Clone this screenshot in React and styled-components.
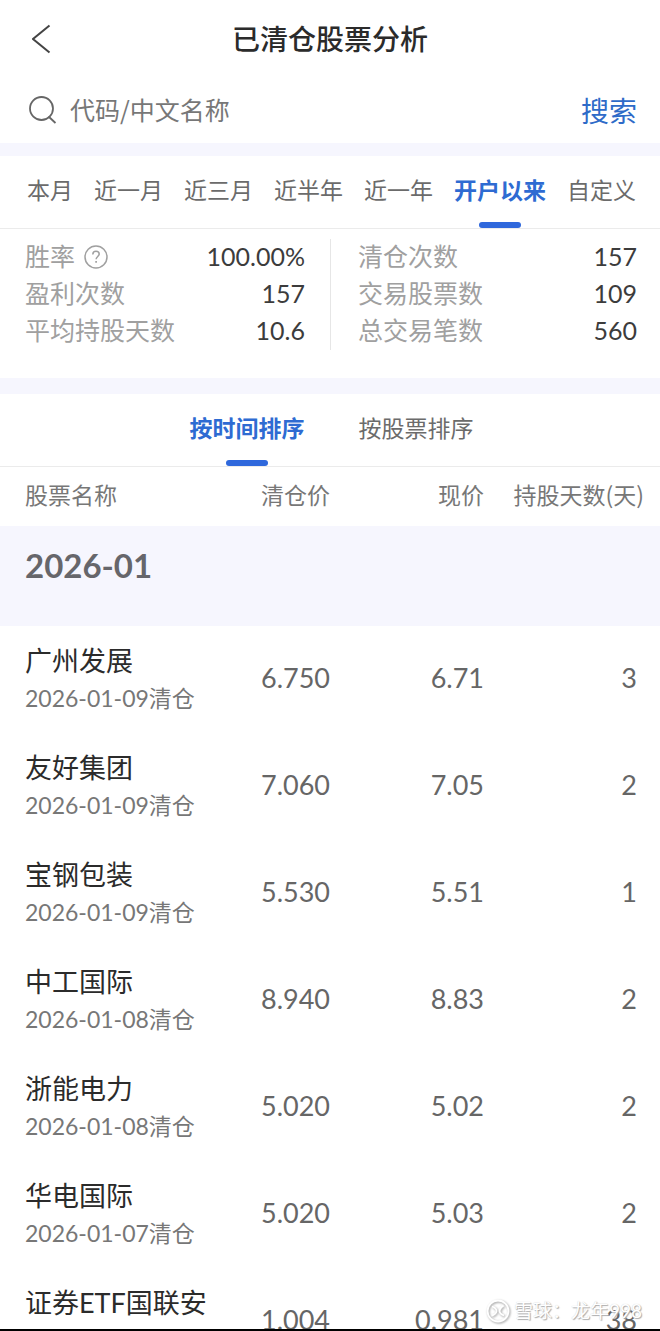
import React, { useState } from "react";
import styled, { createGlobalStyle } from "styled-components";

const PERIODS = ["本月", "近一月", "近三月", "近半年", "近一年", "开户以来", "自定义"];
const SORTS = ["按时间排序", "按股票排序"];

const LEFT_STATS = [
  { label: "胜率", value: "100.00%", help: true },
  { label: "盈利次数", value: "157" },
  { label: "平均持股天数", value: "10.6" }
];

const RIGHT_STATS = [
  { label: "清仓次数", value: "157" },
  { label: "交易股票数", value: "109" },
  { label: "总交易笔数", value: "560" }
];

const STOCKS = [
  { name: "广州发展", date: "2026-01-09", sell: "6.750", now: "6.71", days: 3 },
  { name: "友好集团", date: "2026-01-09", sell: "7.060", now: "7.05", days: 2 },
  { name: "宝钢包装", date: "2026-01-09", sell: "5.530", now: "5.51", days: 1 },
  { name: "中工国际", date: "2026-01-08", sell: "8.940", now: "8.83", days: 2 },
  { name: "浙能电力", date: "2026-01-08", sell: "5.020", now: "5.02", days: 2 },
  { name: "华电国际", date: "2026-01-07", sell: "5.020", now: "5.03", days: 2 },
  { name: "证券ETF国联安", date: "2026-01-07", sell: "1.004", now: "0.981", days: 38 }
];

const StatList = ({ items }) => (
  <StatColumn>
    {items.map(({ label, value, help }) => (
      <StatRow key={label}>
        <dt>
          {label}
          {help && (
            <HelpButton type="button" aria-label="胜率说明">
              <svg width="24" height="24" viewBox="0 0 24 24" fill="none" stroke="#a0a0a0">
                <circle cx="12" cy="12" r="11" strokeWidth="1.5" />
                <path
                  d="M8.8 9.4c0-2 1.4-3.2 3.2-3.2s3.2 1.2 3.2 2.9c0 2.3-3.1 2.6-3.1 5.2"
                  strokeWidth="1.5"
                />
                <path d="M12.1 16v1.8" strokeWidth="1.7" />
              </svg>
            </HelpButton>
          )}
        </dt>
        <dd>{value}</dd>
      </StatRow>
    ))}
  </StatColumn>
);

const App = () => {
  const [period, setPeriod] = useState("开户以来");
  const [sort, setSort] = useState("按时间排序");

  return (
    <>
      <GlobalStyle />
      <Page>
        <Header>
          <BackButton type="button" aria-label="返回">
            <svg width="20" height="30" viewBox="0 0 20 30" fill="none" stroke="#444" strokeWidth="2">
              <path d="M17.5 1.5L1 15L17.5 28.5" />
            </svg>
          </BackButton>
          <h1>已清仓股票分析</h1>
        </Header>

        <SearchForm onSubmit={e => e.preventDefault()}>
          <svg width="28" height="28" viewBox="0 0 28 28" fill="none" stroke="#666" strokeWidth="1.8">
            <circle cx="12.5" cy="12.5" r="11.5" />
            <path d="M19.5 20.5L26.5 27" />
          </svg>
          <input type="text" aria-label="代码/中文名称" placeholder="代码/中文名称" />
          <button type="submit">搜索</button>
        </SearchForm>
        <Divider $height={13} />

        <PeriodTabs>
          {PERIODS.map(item => (
            <Tab key={item} type="button" $active={item === period} onClick={() => setPeriod(item)}>
              {item}
            </Tab>
          ))}
        </PeriodTabs>

        <Stats>
          <StatList items={LEFT_STATS} />
          <StatList items={RIGHT_STATS} />
        </Stats>
        <Divider $height={16} />

        <SortTabs>
          {SORTS.map(item => (
            <Tab key={item} type="button" $active={item === sort} onClick={() => setSort(item)}>
              {item}
            </Tab>
          ))}
        </SortTabs>

        <ListArea>
          <StockTable>
            <colgroup>
              <col width="34%" />
              <col width="16%" />
              <col />
              <col width="176" />
            </colgroup>
            <thead>
              <tr>
                <th scope="col">股票名称</th>
                <th scope="col">清仓价</th>
                <th scope="col">现价</th>
                <th scope="col">持股天数(天)</th>
              </tr>
            </thead>
            <tbody>
              <tr>
                <MonthCell colSpan={4} scope="rowgroup">
                  2026-01
                </MonthCell>
              </tr>
              {STOCKS.map(({ name, date, sell, now, days }) => (
                <StockRow key={name}>
                  <td>
                    <StockName>{name}</StockName>
                    <StockDate>{date}清仓</StockDate>
                  </td>
                  <td>{sell}</td>
                  <td>{now}</td>
                  <td>{days}</td>
                </StockRow>
              ))}
            </tbody>
          </StockTable>
        </ListArea>

        <Watermark>
          <svg width="24" height="24" viewBox="0 0 24 24" fill="none" stroke="#fff" strokeWidth="1.8">
            <circle cx="12" cy="12" r="10.5" />
            <path d="M6 7.5c2 .5 4.5 2.5 4.5 4.500s-2.500 4-5 4.500M17.500 6.500c-2 1.500-4 3.500-4 5.500s2 3.500 4.500 4.500" />
          </svg>
          <span>雪球：龙年998</span>
        </Watermark>
        <BottomBar />
      </Page>
    </>
  );
};

export default App;

const GlobalStyle = createGlobalStyle`
  * {
    box-sizing: border-box;
  }

  body {
    margin: 0;
    background-color: white;
    font-family: Lato, "Noto Sans CJK SC", sans-serif;
    color: #666;
  }

  button,
  input {
    padding: 0;
    border: none;
    background: none;
    font-family: inherit;
    color: inherit;
  }

  button {
    cursor: pointer;
  }

  svg {
    display: block;
    flex-shrink: 0;
  }
`;

const Page = styled.main`
  position: relative;
  display: flex;
  flex-direction: column;
  width: 100%;
  height: 100vh;
  overflow: hidden;
`;

const Header = styled.header`
  display: grid;
  grid-template-columns: 48px 1fr 48px;
  align-items: center;
  flex-shrink: 0;
  height: 78px;
  padding: 0 32px;

  h1 {
    margin: 0;
    padding-bottom: 2px;
    text-align: center;
    font-size: 28px;
    font-weight: 500;
    color: #2b2b2b;
  }
`;

const BackButton = styled.button`
  justify-self: start;
`;

const SearchForm = styled.form`
  display: flex;
  align-items: center;
  flex-shrink: 0;
  gap: 13px;
  height: 65px;
  padding: 0 23px 2px 29px;

  input {
    flex: 1;
    min-width: 0;
    height: 40px;
    padding-bottom: 2px;
    font-family: "Noto Sans CJK SC", sans-serif;
    font-size: 25px;
    outline: none;

    &::placeholder {
      color: #777;
      opacity: 1;
    }
  }

  button {
    font-size: 28px;
    color: #2e6bc8;
  }
`;

const Divider = styled.div`
  flex-shrink: 0;
  height: ${({ $height }) => $height}px;
  background-color: #f6f6fe;
`;

const TabBar = styled.nav`
  display: flex;
  flex-shrink: 0;
  height: 73px;
  border-bottom: 1px solid #ebebeb;
`;

const PeriodTabs = styled(TabBar)`
  justify-content: space-between;
  padding: 0 24px 0 27px;
`;

const SortTabs = styled(TabBar)`
  justify-content: center;
  gap: 54px;
  padding-left: 3px;
`;

const Tab = styled.button`
  display: flex;
  flex-direction: column;
  align-items: center;
  justify-content: space-between;
  padding-top: 17px;
  line-height: 34px;
  font-size: 23px;
  font-weight: ${({ $active }) => ($active ? 700 : 400)};
  color: ${({ $active }) => ($active ? "#2e6bd2" : "#6b6b6b")};
  white-space: nowrap;

  &::after {
    content: "";
    width: 42px;
    height: 6px;
    border-radius: 3px;
    background-color: ${({ $active }) => ($active ? "#2f68dc" : "transparent")};
  }
`;

const Stats = styled.section`
  display: grid;
  grid-template-columns: 1fr 1fr;
  flex-shrink: 0;
  padding: 10px 0 28px;
`;

const StatColumn = styled.dl`
  margin: 0;
  padding: 0 25px;

  & + & {
    border-left: 1px solid #e6e6e6;
    padding: 0 23px 0 27px;
  }
`;

const StatRow = styled.div`
  display: flex;
  align-items: center;
  justify-content: space-between;
  height: 37px;
  padding-bottom: 2px;
  line-height: 35px;

  dt {
    display: flex;
    align-items: center;
    gap: 9px;
    font-size: 25px;
    color: #a0a0a0;
  }

  dd {
    margin: 0;
    font-size: 25px;
    color: #3c3c3c;
  }
`;

const HelpButton = styled.button`
  width: 24px;
  height: 24px;
`;

const ListArea = styled.section`
  flex: 1;
  min-height: 0;
  overflow: hidden;
`;

const StockTable = styled.table`
  width: 100%;
  table-layout: fixed;
  border-collapse: collapse;
  text-align: right;

  th,
  td {
    padding: 0;
    white-space: nowrap;
  }

  thead th {
    height: 59px;
    padding-bottom: 5px;
    font-family: "Noto Sans CJK SC", sans-serif;
    font-size: 23px;
    font-weight: 400;
    color: #777;
  }

  th:first-child,
  td:first-child {
    padding-left: 25px;
    text-align: left;
  }

  th:last-child {
    padding-right: 16px;
  }

  td:last-child {
    padding-right: 23px;
  }
`;

const MonthCell = styled.th`
  height: 100px;
  background-color: #f6f6fe;
  vertical-align: top;
  line-height: 78px;
  font-size: 33px;
  font-weight: 700;
  color: #66666b;
`;

const StockRow = styled.tr`
  height: 107px;
  font-size: 27px;
  color: #666;

  && td {
    padding-bottom: 4px;
  }

  && td:first-child {
    padding-bottom: 2px;
  }
`;

const StockName = styled.div`
  line-height: 38px;
  font-size: 27px;
  color: #2b2b2b;
`;

const StockDate = styled.div`
  line-height: 36px;
  font-size: 23px;
  color: #777;
`;

const Watermark = styled.div`
  position: absolute;
  right: 18px;
  bottom: 6px;
  display: flex;
  align-items: center;
  gap: 4px;
  line-height: 28px;
  font-size: 19px;
  color: white;
  text-shadow: 1px 1px 1px #aaa, 0 0 1px #ccc;

  svg {
    filter: drop-shadow(1px 1px 1px #999);
  }
`;

const BottomBar = styled.footer`
  flex-shrink: 0;
  height: 2px;
  background-color: black;
`;
